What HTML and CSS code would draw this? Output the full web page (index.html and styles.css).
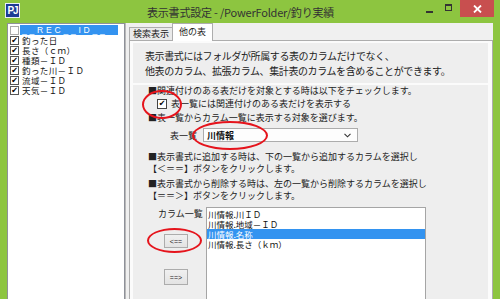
FILE: index.html
```html
<!DOCTYPE html>
<html lang="ja">
<head>
  <meta charset="UTF-8" />
  <title>表示書式設定</title>
  <link rel="stylesheet" href="styles.css">
</head>
<body>

  <div class="titlebar">
    <span class="app-icon">PJ</span>
    <span class="title">表示書式設定 - /PowerFolder/釣り実績</span>
    <div class="controls">
      <span class="btn-min"></span>
      <span class="btn-max"></span>
      <span class="btn-close">
        <svg width="9" height="8" viewBox="0 0 9 8"><path d="M1 0.5 L8 7.5 M8 0.5 L1 7.5" stroke="#fff" stroke-width="1.8"/></svg>
      </span>
    </div>
  </div>

  <div class="main">
    <div class="fieldlist">
      <div class="field"><span class="check off"></span><span class="field-name selected">__REC__ID__</span></div>
      <div class="field"><span class="check">✔</span><span class="field-name">釣った日</span></div>
      <div class="field"><span class="check">✔</span><span class="field-name">長さ（ｃｍ）</span></div>
      <div class="field"><span class="check">✔</span><span class="field-name">種類－ＩＤ</span></div>
      <div class="field"><span class="check">✔</span><span class="field-name">釣った川－ＩＤ</span></div>
      <div class="field"><span class="check">✔</span><span class="field-name">流域－ＩＤ</span></div>
      <div class="field"><span class="check">✔</span><span class="field-name">天気－ＩＤ</span></div>
    </div>

    <div class="splitter"></div>

    <div class="tabs">
      <div class="tab-strip">
        <span class="tab">検索表示</span>
        <span class="tab active">他の表</span>
      </div>
      <div class="tab-page">
        <div class="panel intro">
          <p>表示書式にはフォルダが所属する表のカラムだけでなく、</p>
          <p>他表のカラム、拡張カラム、集計表のカラムを含めることができます。</p>
        </div>
        <div class="panel options">
          <p class="line">■関連付けのある表だけを対象とする時は以下をチェックします。</p>
          <label class="line check-row"><span class="check">✔</span>表一覧には関連付けのある表だけを表示する</label>
          <p class="line gap2">■表一覧からカラム一覧に表示する対象を選びます。</p>
          <div class="table-row">
            <span class="table-label">表一覧</span>
            <div class="combo">
              <span>川情報</span>
              <svg width="7" height="5" viewBox="0 0 7 5"><path d="M0.5 0.8 L3.5 3.8 L6.5 0.8" fill="none" stroke="#333" stroke-width="1.1"/></svg>
            </div>
          </div>
          <p class="line gap9">■表示書式に追加する時は、下の一覧から追加するカラムを選択し</p>
          <p class="line">【＜＝＝】ボタンをクリックします。</p>
          <p class="line gap3">■表示書式から削除する時は、左の一覧から削除するカラムを選択し</p>
          <p class="line">【＝＝＞】ボタンをクリックします。</p>

          <div class="column-row">
            <div class="column-side">
              <span class="column-label">カラム一覧</span>
              <button class="move add">&lt;==</button>
              <button class="move remove">==&gt;</button>
            </div>
            <div class="column-list">
              <div class="item">川情報.川ＩＤ</div>
              <div class="item">川情報.地域－ＩＤ</div>
              <div class="item selected">川情報.名称</div>
              <div class="item">川情報.長さ（ｋｍ）</div>
            </div>
          </div>
        </div>
      </div>
    </div>
  </div>

  <!-- red marks drawn over the screenshot -->
  <span class="mark mark-check"></span>
  <span class="mark mark-combo"></span>
  <span class="mark mark-add"></span>

</body>
</html>
```

FILE: styles.css
```css
* {
  box-sizing: border-box;
}

body {
  margin: 0;
  width: 500px;
  height: 299px;
  overflow: hidden;
  position: relative;
  background: #8dc540;
  font-family: "Noto Sans CJK JP", "Noto Sans", sans-serif;
  color: #111;
}

p {
  margin: 0;
}

/* title bar */
.titlebar {
  height: 23px;
  display: flex;
  align-items: flex-start;
}

.app-icon {
  margin: 3px 0 0 5px;
  width: 15px;
  height: 15px;
  background: #1d3b94;
  border: 1px solid #e8eef8;
  color: #fff;
  font-family: "Liberation Sans", sans-serif;
  font-weight: bold;
  font-size: 10px;
  line-height: 13px;
  letter-spacing: -1px;
  text-align: center;
}

.title {
  margin: 4px 0 0 127px;
  font-size: 11px;
  line-height: 16px;
  letter-spacing: -0.2px;
  color: #333;
  white-space: nowrap;
}

.controls {
  margin-left: auto;
  display: flex;
  align-items: flex-start;
}

.btn-min {
  width: 7px;
  height: 2px;
  background: #333;
  margin: 11px 0 0 0;
}

.btn-max {
  width: 7px;
  height: 7px;
  border: 1px solid #333;
  border-top-width: 2px;
  margin: 4px 0 0 12px;
}

.btn-close {
  width: 34px;
  height: 17px;
  margin: 0 6px 0 8px;
  background: #c84f4f;
  display: flex;
  align-items: center;
  justify-content: center;
}

/* main area */
.main {
  display: flex;
  height: 276px;
  padding: 0 7px;
}

.fieldlist {
  width: 118px;
  background: #fff;
  border: 1px solid #8e9199;
  border-bottom: none;
  padding-top: 1px;
}

.field {
  display: flex;
  align-items: center;
  height: 10px;
  padding-left: 2px;
  font-size: 8.5px;
  line-height: 10px;
}

.check {
  width: 9px;
  height: 9px;
  border: 1px solid #555;
  background: #fff;
  font-size: 8px;
  line-height: 7px;
  text-align: center;
  font-family: "DejaVu Sans", sans-serif;
  color: #000;
  flex: none;
}

.check.off {
  border-color: #aaa;
}

.field-name {
  margin-left: 1px;
  padding-left: 2px;
  white-space: nowrap;
  letter-spacing: 0.4px;
}

.field-name.selected {
  width: 98px;
  background: #3393f0;
  color: #fff;
  font-family: "Liberation Sans", sans-serif;
  letter-spacing: 2.8px;
}

.splitter {
  width: 4px;
  background: #efefef;
  border-left: 1px solid #b9b9b9;
}

/* tab control */
.tabs {
  flex: 1;
  display: flex;
  flex-direction: column;
  background: #f0f0f0;
}

.tab-strip {
  height: 17px;
  display: flex;
  align-items: flex-end;
  background: #f0f0f0;
  position: relative;
  z-index: 1;
}

.tab {
  height: 13px;
  padding: 0 3px;
  font-size: 9px;
  line-height: 12px;
  border: 1px solid #adadad;
  border-bottom: none;
  background: #eaeaea;
  color: #222;
}

.tab.active {
  height: 18px;
  padding: 2px 6px 0 6px;
  margin-left: -1px;
  margin-bottom: -1px;
  background: #fff;
}

.tab-page {
  flex: 1;
  background: #fbfbfb;
  border: 1px solid #adadad;
  border-bottom: none;
  padding: 2px 4px 0 3px;
  display: flex;
  flex-direction: column;
  gap: 2px;
}

.panel {
  background: #eeeeee;
}

.intro {
  padding: 5px 0 5px 12px;
  font-size: 10px;
  line-height: 15px;
  letter-spacing: -0.4px;
  color: #222;
}

.options {
  flex: 1;
  padding-left: 15px;
  font-size: 9px;
  color: #222;
}

.line {
  display: block;
  line-height: 12px;
  white-space: nowrap;
}

.check-row {
  display: flex;
  align-items: center;
  margin: 1px 0 0 9px;
}

.check-row .check {
  width: 10px;
  height: 10px;
  margin-right: 4px;
  line-height: 8px;
  border-color: #444;
}

.gap2 {
  margin-top: 2px;
}

.gap3 {
  margin-top: 3px;
}

.gap9 {
  margin-top: 9px;
}

.table-row {
  display: flex;
  align-items: center;
  margin-top: 4px;
  height: 14px;
}

.table-label {
  margin-left: 22px;
  width: 33px;
}

.combo {
  width: 155px;
  height: 14px;
  border: 1px solid #acacac;
  background: #fdfdfd;
  display: flex;
  align-items: center;
  justify-content: space-between;
  padding: 0 6px 0 3px;
  font-weight: bold;
  color: #111;
}

/* column list row */
.column-row {
  display: flex;
  margin-top: 5px;
}

.column-side {
  width: 58px;
  display: flex;
  flex-direction: column;
  align-items: flex-start;
}

.column-label {
  margin: 1px 0 0 10px;
  line-height: 12px;
}

.move {
  margin-left: 16px;
  width: 24px;
  padding: 0;
  border: 1px solid #acacac;
  background: linear-gradient(#f0f0f0, #e3e3e3);
  font-family: "Liberation Sans", sans-serif;
  font-size: 7px;
  color: #222;
}

.move.add {
  margin-top: 14px;
  height: 14px;
}

.move.remove {
  margin-top: 21px;
  height: 16px;
}

.column-list {
  width: 220px;
  height: 100px;
  background: #fff;
  border: 1px solid #a5a5a5;
  padding-top: 1px;
}

.item {
  height: 10px;
  font-size: 8.5px;
  line-height: 10px;
  padding-left: 1px;
  white-space: nowrap;
  color: #111;
}

.item.selected {
  background: #3393f0;
  color: #fff;
}

/* red annotation ellipses */
.mark {
  position: absolute;
  border: 2px solid #e5141c;
  border-radius: 50%;
}

.mark-check {
  left: 142px;
  top: 90px;
  width: 40px;
  height: 29px;
}

.mark-combo {
  left: 192px;
  top: 121px;
  width: 76px;
  height: 29px;
}

.mark-add {
  left: 147px;
  top: 228px;
  width: 55px;
  height: 25px;
}
```
